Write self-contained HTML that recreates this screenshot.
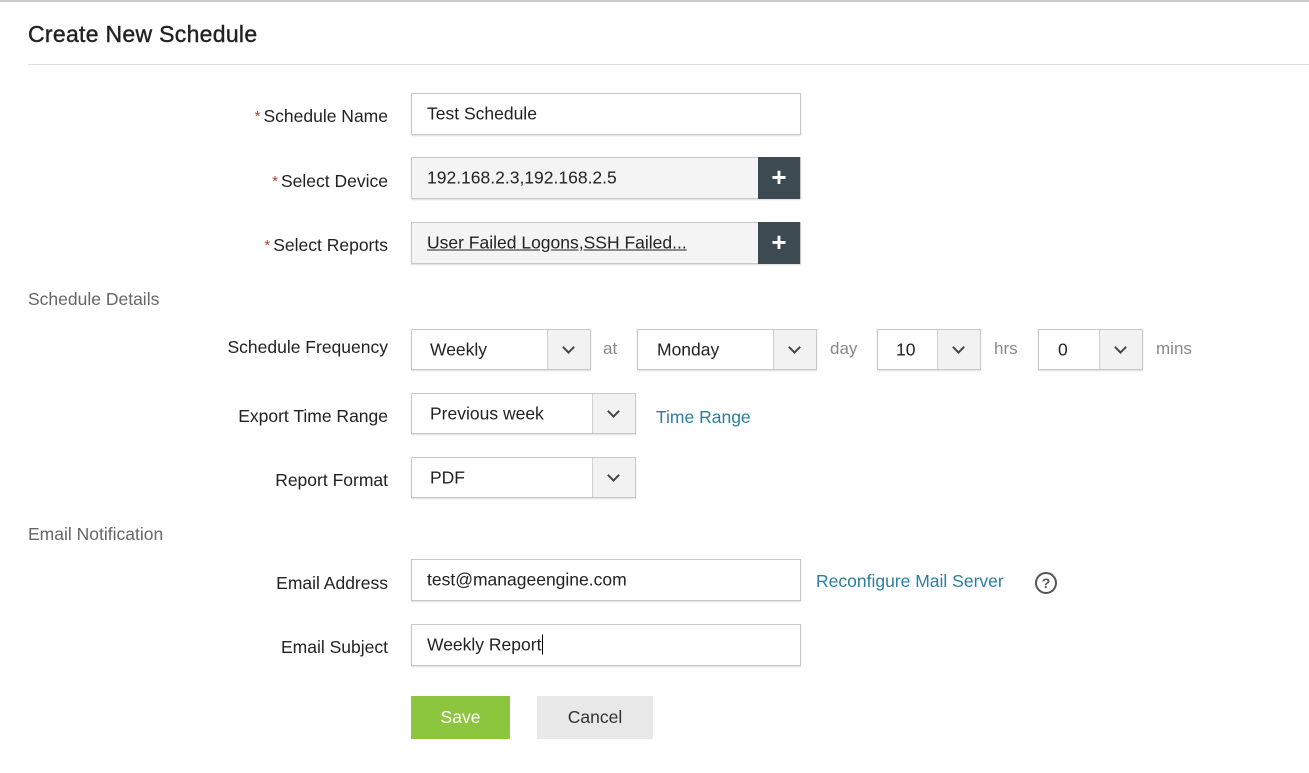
<!DOCTYPE html><html><head><style>
body{margin:0;width:1309px;height:773px;background:#fff;font-family:"Liberation Sans",sans-serif;position:relative;overflow:hidden;color:#222}
.a{position:absolute}
.l{position:absolute;right:921px;font-size:17.5px;color:#222;white-space:nowrap}
.s{color:#c0392b;font-size:15px;vertical-align:1px;margin-right:3px}
.box{position:absolute;border:1px solid #c8c8c8;box-shadow:0 1px 1px #ddd;background:#fff;box-sizing:border-box;font-size:17.5px;color:#222}
.box span{position:absolute;left:15px;top:50%;transform:translateY(-50%);white-space:nowrap}
.arr{position:absolute;right:0;top:0;bottom:0;width:42px;background:#f2f2f2;border-left:1px solid #d0d0d0}
.arr:after{content:"";position:absolute;left:16px;top:13px;width:7px;height:7px;border-right:2.5px solid #444;border-bottom:2.5px solid #444;transform:rotate(45deg)}
.plus{position:absolute;right:0;top:-1px;bottom:-1px;width:42px;background:#3d4a52;color:#fff;font-size:26px;font-weight:bold;text-align:center;line-height:40px}
.g{position:absolute;font-size:17px;color:#888}
.sec{position:absolute;left:28px;font-size:17.5px;color:#666}
.lk{position:absolute;font-size:17.5px;color:#2a7fa0}
</style></head><body>
<div class="a" style="left:0;top:0;width:1309px;height:2px;background:#ccc"></div>
<div class="a" style="left:28px;top:21px;font-size:23px;color:#222;letter-spacing:0.3px;-webkit-text-stroke:0.4px #222">Create New Schedule</div>
<div class="a" style="left:28px;top:64px;width:1281px;height:1px;background:#ddd"></div>

<div class="l" style="top:106px"><span class="s">*</span>Schedule Name</div>
<div class="box" style="left:411px;top:93px;width:390px;height:42px"><span>Test Schedule</span></div>

<div class="l" style="top:171px"><span class="s">*</span>Select Device</div>
<div class="box" style="left:411px;top:157px;width:390px;height:42px;background:#f4f4f4"><span>192.168.2.3,192.168.2.5</span><div class="plus">+</div></div>

<div class="l" style="top:235px"><span class="s">*</span>Select Reports</div>
<div class="box" style="left:411px;top:222px;width:390px;height:42px;background:#f4f4f4"><span style="text-decoration:underline">User Failed Logons,SSH Failed...</span><div class="plus">+</div></div>

<div class="sec" style="top:289px">Schedule Details</div>

<div class="l" style="top:337px">Schedule Frequency</div>
<div class="box" style="left:411px;top:329px;width:180px;height:41px"><span style="left:18px">Weekly</span><div class="arr"></div></div>
<div class="g" style="left:603px;top:339px">at</div>
<div class="box" style="left:637px;top:329px;width:180px;height:41px"><span style="left:19px">Monday</span><div class="arr"></div></div>
<div class="g" style="left:830px;top:339px">day</div>
<div class="box" style="left:877px;top:329px;width:104px;height:41px"><span style="left:18px">10</span><div class="arr"></div></div>
<div class="g" style="left:994px;top:339px">hrs</div>
<div class="box" style="left:1038px;top:329px;width:105px;height:41px"><span style="left:19px">0</span><div class="arr"></div></div>
<div class="g" style="left:1156px;top:339px">mins</div>

<div class="l" style="top:406px">Export Time Range</div>
<div class="box" style="left:411px;top:393px;width:225px;height:41px"><span style="left:18px">Previous week</span><div class="arr"></div></div>
<div class="lk" style="left:656px;top:407px">Time Range</div>

<div class="l" style="top:470px">Report Format</div>
<div class="box" style="left:411px;top:457px;width:225px;height:41px"><span style="left:18px">PDF</span><div class="arr"></div></div>

<div class="sec" style="top:524px">Email Notification</div>

<div class="l" style="top:573px">Email Address</div>
<div class="box" style="left:411px;top:559px;width:390px;height:42px"><span>test@manageengine.com</span></div>
<div class="lk" style="left:816px;top:571px">Reconfigure Mail Server</div>
<div class="a" style="left:1035px;top:572px;width:18px;height:18px;border:2px solid #555;border-radius:50%;text-align:center;font-size:14px;font-weight:bold;line-height:18px;color:#555">?</div>

<div class="l" style="top:637px">Email Subject</div>
<div class="box" style="left:411px;top:624px;width:390px;height:42px"><span>Weekly Report<span style="position:static;border-left:1px solid #000;margin-left:1px"></span></span></div>

<div class="a" style="left:411px;top:696px;width:99px;height:43px;background:#8cc63f;color:#fff;font-size:17.5px;text-align:center;line-height:43px">Save</div>
<div class="a" style="left:537px;top:696px;width:116px;height:43px;background:#e8e8e8;color:#333;font-size:17.5px;text-align:center;line-height:43px">Cancel</div>
</body></html>
